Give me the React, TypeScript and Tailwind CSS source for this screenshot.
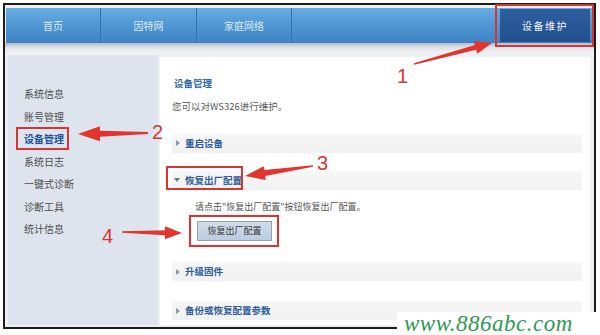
import React from "react";

type Pt = [number, number];

function arrowPoints(tail: Pt, tip: Pt, w0: number, w1: number, L: number, H: number): string {
  const dx = tip[0] - tail[0];
  const dy = tip[1] - tail[1];
  const len = Math.hypot(dx, dy);
  const ux = dx / len;
  const uy = dy / len;
  const nx = -uy;
  const ny = ux;
  const bx = tip[0] - ux * L;
  const by = tip[1] - uy * L;
  const pts: Pt[] = [
    [tail[0] + (nx * w0) / 2, tail[1] + (ny * w0) / 2],
    [bx + (nx * w1) / 2, by + (ny * w1) / 2],
    [bx + (nx * H) / 2, by + (ny * H) / 2],
    [tip[0], tip[1]],
    [bx - (nx * H) / 2, by - (ny * H) / 2],
    [bx - (nx * w1) / 2, by - (ny * w1) / 2],
    [tail[0] - (nx * w0) / 2, tail[1] - (ny * w0) / 2],
  ];
  return pts.map((p) => `${p[0].toFixed(1)},${p[1].toFixed(1)}`).join(" ");
}

const sideItems = ["系统信息", "账号管理", "设备管理", "系统日志", "一键式诊断", "诊断工具", "统计信息"];

function Row({ label, open }: { label: string; open?: boolean }) {
  return (
    <div className="flex h-[19px] items-center bg-gradient-to-b from-[#f7f7f7] to-[#f1f1f1] pl-[4px]">
      {open ? (
        <span className="mr-[5px] ml-[-2px] inline-block h-0 w-0 border-x-[3px] border-t-[4px] border-x-transparent border-t-[#6a7a90]" />
      ) : (
        <span className="mr-[5px] inline-block h-0 w-0 border-y-[3px] border-l-[4px] border-y-transparent border-l-[#8a98aa]" />
      )}
      <span className="text-[9.5px] font-bold text-[#2d5a9c]">{label}</span>
    </div>
  );
}

export default function App() {
  return (
    <div
      className="relative h-[335px] w-[600px] overflow-hidden bg-white"
      style={{ fontFamily: '"Noto Sans CJK SC", "Noto Sans", sans-serif' }}
    >
      <div className="ml-[3px] mt-[3px] flex h-[326px] w-[593px] flex-col border-2 border-[#1c1c1c] bg-[#eef0f3]">
        {/* nav */}
        <div className="mt-[3px] ml-[1px] mr-[2px] flex h-[35px] bg-gradient-to-b from-[#68ade2] via-[#4f96d3] to-[#3c84c5] text-[10px] text-[#dce8f5]">
          <div className="flex w-[95px] items-center justify-center border-r border-[#3572ad]">首页</div>
          <div className="flex w-[96px] items-center justify-center border-r border-[#3572ad]">因特网</div>
          <div className="flex w-[95px] items-center justify-center border-r border-[#3572ad]">家庭网络</div>
          <div className="flex-1" />
          <div className="my-[1px] mr-[2px] flex w-[90px] items-center justify-center bg-gradient-to-b from-[#2f5f9f] to-[#22508e] tracking-[1.5px] text-[#eef3fa]">
            设备维护
          </div>
        </div>
        <div className="h-[9px] bg-gradient-to-b from-[#b4bcc6] via-[#dfe3e8] to-[#eef0f3]" />
        {/* body */}
        <div className="mt-[3px] flex flex-1 pb-[2px]">
          <div className="ml-[3px] w-[150px] bg-[#dee4ed] pl-[16px] pt-[28px]">
            {sideItems.map((s) =>
              s === "设备管理" ? (
                <div key={s} className="h-[22.5px] text-[10px] leading-[22.5px] font-bold text-[#1f4f9e]">
                  {s}
                </div>
              ) : (
                <div key={s} className="h-[22.5px] text-[10px] leading-[22.5px] text-[#4d4d4d]">
                  {s}
                </div>
              )
            )}
          </div>
          <div className="ml-[2px] mr-[4px] mt-[2px] flex-1 bg-white pl-[12px] pr-[8px]">
            <div className="ml-[2px] mt-[19px] text-[9.5px] font-bold text-[#2f62aa]">设备管理</div>
            <div className="mt-[9px] text-[9.5px] text-[#5a5a5a]">您可以对WS326进行维护。</div>
            <div className="mt-[20px]">
              <Row label="重启设备" />
            </div>
            <div className="mt-[18px]">
              <Row label="恢复出厂配置" open />
            </div>
            <div className="ml-[23px] mt-[10px] text-[9px] text-[#555]">请点击"恢复出厂配置"按钮恢复出厂配置。</div>
            <div className="ml-[25px] mt-[8px] flex h-[20px] w-[75px] items-center justify-center border border-[#93a3b6] bg-gradient-to-b from-[#d0dcea] to-[#bccde0] text-[9px] text-[#3a3a3a]">
              恢复出厂配置
            </div>
            <div className="mt-[21px]">
              <Row label="升级固件" />
            </div>
            <div className="mt-[20px]">
              <Row label="备份或恢复配置参数" />
            </div>
          </div>
        </div>
      </div>

      {/* annotations */}
      <svg className="pointer-events-none absolute left-0 top-0" width="600" height="335" viewBox="0 0 600 335">
        <g fill="none" stroke="#d9342f" strokeWidth="2">
          <rect x="496" y="5" width="97" height="41" />
          <rect x="17" y="128" width="51" height="21" />
          <rect x="167" y="167" width="75" height="22" />
          <rect x="190" y="216" width="88" height="30" />
        </g>
        <g fill="#e2352f">
          <polygon points={arrowPoints([414, 64], [492, 43], 1.5, 5, 17, 13)} />
          <polygon points={arrowPoints([148, 133], [78, 134], 2, 6, 22, 15)} />
          <polygon points={arrowPoints([313, 166], [245, 176], 1.5, 6, 20, 14)} />
          <polygon points={arrowPoints([122, 232], [182, 233], 1.5, 5, 17, 13)} />
        </g>
        <g fill="#d8362f" fontFamily="Liberation Sans, sans-serif" fontSize="20">
          <text x="397" y="83">1</text>
          <text x="152" y="139">2</text>
          <text x="317" y="170">3</text>
          <text x="102" y="243">4</text>
        </g>
      </svg>

      <div className="absolute left-[397px] top-[312px] flex h-[23px] w-[203px] items-center bg-white pl-[7px]">
        <span
          className="text-[23px] italic leading-none tracking-[0.5px] text-[#2e9a55]"
          style={{ fontFamily: '"Liberation Serif", serif' }}
        >
          www.886abc.com
        </span>
      </div>
    </div>
  );
}
